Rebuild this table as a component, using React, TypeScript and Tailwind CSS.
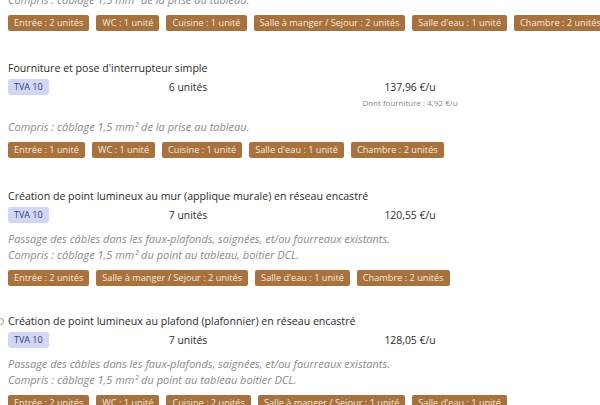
type Item = {
  title: string;
  qty: string;
  price: string;
  sub?: string;
  lines: string[];
  rooms: string[];
  mark?: boolean;
  pad: string;
};

const items: Item[] = [
  {
    title: "Fourniture et pose d'interrupteur simple",
    qty: "6 unités",
    price: "137,96 €/u",
    sub: "Dont fourniture : 4,92 €/u",
    pad: "pt-[29px]",
    lines: ["Compris : câblage 1,5 mm² de la prise au tableau."],
    rooms: [
      "Entrée : 1 unité",
      "WC : 1 unité",
      "Cuisine : 1 unité",
      "Salle d'eau : 1 unité",
      "Chambre : 2 unités",
    ],
  },
  {
    title:
      "Création de point lumineux au mur (applique murale) en réseau encastré",
    qty: "7 unités",
    price: "120,55 €/u",
    pad: "pt-[30px]",
    lines: [
      "Passage des câbles dans les faux-plafonds, saignées, et/ou fourreaux existants.",
      "Compris : câblage 1,5 mm² du point au tableau, boitier DCL.",
    ],
    rooms: [
      "Entrée : 2 unités",
      "Salle à manger / Sejour : 2 unités",
      "Salle d'eau : 1 unité",
      "Chambre : 2 unités",
    ],
  },
  {
    title:
      "Création de point lumineux au plafond (plafonnier) en réseau encastré",
    qty: "7 unités",
    price: "128,05 €/u",
    mark: true,
    pad: "pt-[27px]",
    lines: [
      "Passage des câbles dans les faux-plafonds, saignées, et/ou fourreaux existants.",
      "Compris : câblage 1,5 mm² du point au tableau boitier DCL.",
    ],
    rooms: [
      "Entrée : 2 unités",
      "WC : 1 unité",
      "Cuisine : 2 unités",
      "Salle à manger / Sejour : 1 unité",
      "Salle d'eau : 1 unité",
    ],
  },
];

function Rooms({ rooms }: { rooms: string[] }) {
  return (
    <div className="flex gap-[7px] whitespace-nowrap">
      {rooms.map((r) => (
        <span
          key={r}
          className="h-4 px-[6px] rounded-[2px] bg-[#a8723f] text-[#f5e9dc] text-[9.2px] leading-4"
        >
          {r}
        </span>
      ))}
    </div>
  );
}

function Line({ item }: { item: Item }) {
  return (
    <div className={item.pad}>
      <div className="relative h-4 leading-4 text-[10.6px] text-[#2b2b2b]">
        {item.mark && (
          <span className="absolute -left-[11px] top-[5px] w-[7px] h-[7px] rounded-full border border-[#999]" />
        )}
        {item.title}
      </div>
      <div className="mt-[3px] grid grid-cols-[120px_120px_324px] text-[10.4px] text-[#2b2b2b]">
        <div>
          <span className="inline-block h-4 px-[6px] rounded-[3px] bg-[#d4d7f3] text-[#2f3d7c] text-[9px] leading-4 font-medium">
            TVA 10
          </span>
        </div>
        <div className="text-center leading-4">{item.qty}</div>
        <div className="text-center">
          <div className="leading-4">{item.price}</div>
          {item.sub && (
            <div className="leading-4 text-[8px] text-[#888]">{item.sub}</div>
          )}
        </div>
      </div>
      <div className="mt-2">
        {item.lines.map((l) => (
          <div key={l} className="h-4 leading-4 text-[11px] italic text-[#8a8a8a]">
            {l}
          </div>
        ))}
      </div>
      <div className="mt-[7px]">
        <Rooms rooms={item.rooms} />
      </div>
    </div>
  );
}

export default function App() {
  return (
    <div
      className="w-[600px] h-[405px] overflow-hidden bg-white px-2"
      style={{ fontFamily: '"Open Sans", "Noto Sans", sans-serif' }}
    >
      <div className="-mt-2">
        <div className="h-4 leading-4 text-[11px] italic text-[#8a8a8a]">
          Compris : câblage 1,5 mm² de la prise au tableau.
        </div>
        <div className="mt-[7px]">
          <Rooms
            rooms={[
              "Entrée : 2 unités",
              "WC : 1 unité",
              "Cuisine : 1 unité",
              "Salle à manger / Sejour : 2 unités",
              "Salle d'eau : 1 unité",
              "Chambre : 2 unités",
            ]}
          />
        </div>
        {items.map((it) => (
          <Line key={it.title} item={it} />
        ))}
      </div>
    </div>
  );
}
